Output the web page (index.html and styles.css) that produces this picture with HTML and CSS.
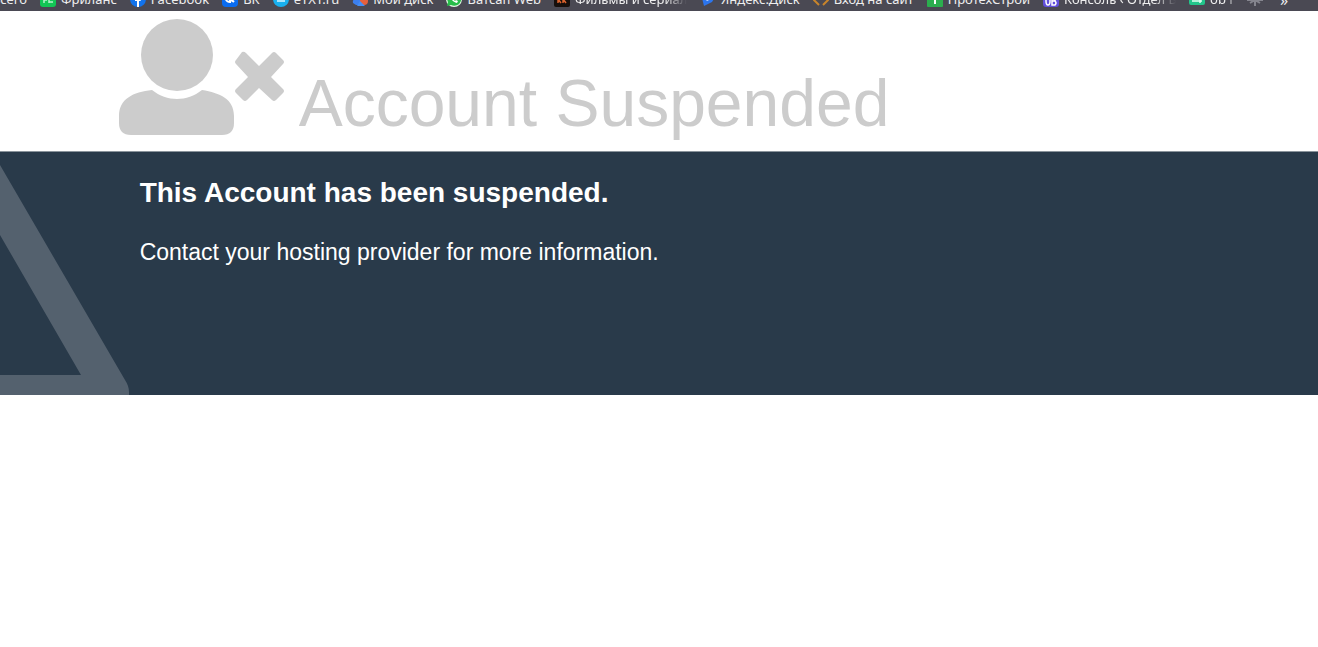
FILE: index.html
```html
<!DOCTYPE html>
<html lang="en">
<head>
    <meta charset="UTF-8">
    <meta name="viewport" content="width=device-width, initial-scale=1.0">
    <title>Account Suspended</title>
    <link rel="stylesheet" href="styles.css">
</head>
<body>
    <nav class="bookmarks" lang="ru">
        <a href="#" class="first">всего</a>
        <a href="#"><svg viewBox="0 0 16 16"><rect width="16" height="16" rx="3" fill="#12c755"/><path d="M4 7v5M4 9h3M9 12V8M9 11h4" stroke="#b5f2cb" stroke-width="1.5" fill="none"/></svg><span>Фриланс</span></a>
        <a href="#"><svg viewBox="0 0 16 16"><circle cx="8" cy="8" r="8" fill="#1273ec"/><path d="M7 16v-6H5V8h2V6c0-2 1-3 4-3v2c-2 0-2 0-2 3h2l-.4 2H9v6z" fill="#fff"/></svg><span>Facebook</span></a>
        <a href="#"><svg viewBox="0 0 16 16"><rect width="16" height="16" rx="4" fill="#0a6cf0"/><path d="M3 6c1 4 2 5 5 5V6M12 6c-1 2-2 3-4 3 2 0 3 1 4 2" stroke="#fff" stroke-width="2" fill="none"/></svg><span>ВК</span></a>
        <a href="#"><svg viewBox="0 0 16 16"><circle cx="8" cy="8" r="8" fill="#18b0ef"/><path d="M4 10h8M5 7h6" stroke="#d9f5ff" stroke-width="1.5"/></svg><span>eTXT.ru</span></a>
        <a href="#"><svg viewBox="0 0 16 16"><path d="M1 12a4 4 0 0 1 3-5 5 5 0 0 1 8 1v6H4z" fill="#3c80ef"/><circle cx="12" cy="10" r="4" fill="#e6603c"/><path d="M5 15l3-5 5 5z" fill="#438df5"/></svg><span>Мой диск</span></a>
        <a href="#"><svg viewBox="0 0 16 16"><circle cx="8" cy="8" r="8" fill="#e9fbe9"/><path d="M1 15l1-4a7 7 0 1 1 3 3z" fill="#27bd49"/><path d="M5 5c0 4 2 6 6 7l1-2-2-1-1 1-3-3 1-1-1-2z" fill="#fff"/></svg><span>Ватсап Web</span></a>
        <a href="#"><svg viewBox="0 0 16 16"><rect width="16" height="16" rx="2" fill="#160f0c"/><path d="M4 5v7M4 9l3-4M4 8l3 4M9 5v7M9 9l3-4M9 8l3 4" stroke="#d9622d" stroke-width="1.5"/></svg><span class="cut">Фильмы и сериалы</span></a>
        <a href="#"><svg viewBox="0 0 16 16"><path d="M1 3l14 3-3 5-8 4z" fill="#2c75ed"/><path d="M1 3l14 3-8 4z" fill="#d7e7ff"/></svg><span>Яндекс.Диск</span></a>
        <a href="#"><svg viewBox="0 0 16 16"><path d="M5 2L1 9l5 5M11 2l4 7-5 5" stroke="#c8842b" stroke-width="2" fill="none"/></svg><span>Вход на сайт</span></a>
        <a href="#"><svg viewBox="0 0 16 16"><rect width="16" height="16" rx="1" fill="#2bae4e"/><path d="M8 4v9M5 6h6" stroke="#fff" stroke-width="2"/></svg><span>ПротехСтрой</span></a>
        <a href="#"><svg viewBox="0 0 16 16"><rect width="16" height="16" rx="3" fill="#6250dc"/><ellipse cx="5" cy="10" rx="2" ry="4" stroke="#fff" stroke-width="1.5" fill="none"/><path d="M9 6v8h3q2-2 0-4H9q5 0 3-4z" stroke="#fff" stroke-width="1.5" fill="none"/></svg><span class="cut">Консоль ‹ Отдел Веб</span></a>
        <a href="#"><svg viewBox="0 0 16 16"><rect width="16" height="14" rx="2" fill="#22c58b"/><path d="M3 10h10M11 7v5" stroke="#e1fff4" stroke-width="1.5"/></svg><span class="cut short">ob Flex</span></a>
        <a href="#" aria-label="Site"><svg viewBox="0 0 16 16"><path d="M0 9h16M3 6l10 6M13 6L3 12M8 4v11" stroke="#85858e" stroke-width="2"/></svg></a>
        <button type="button" class="more">»</button>
    </nav>

    <header class="wrap heading">
        <svg class="user-icon" viewBox="0 0 166 117" aria-hidden="true">
            <circle cx="58" cy="37" r="36"/>
            <path d="M33 72c15 12 35 12 50 0c18 3 32 9 32 26v7q0 12-12 12H12q-12 0-12-12v-7C0 81 14 74 33 72z"/>
            <path d="M123 34Q125 33 127 35L140 48L153 35Q155 33 157 35L164 42Q166 44 164 46L152 59L164 71Q166 73 164 75L157 82Q155 84 153 82L140 70L128 82Q126 84 124 82L117 75Q115 73 117 71L129 59L117 46Q115 44 117 42Z"/>
        </svg>
        <h1>Account Suspended</h1>
    </header>

    <main class="notice">
        <svg class="triangle" viewBox="0 0 129 232" aria-hidden="true">
            <path d="M0 2L125 217Q129 223 129 229V232H0V212H81L0 72z"/>
        </svg>
        <div class="wrap">
            <div class="message">
                <h2>This Account has been suspended.</h2>
                <p>Contact your hosting provider for more information.</p>
            </div>
        </div>
    </main>
</body>
</html>
```

FILE: styles.css
```css
body {
    margin: 0;
    background-color: #fff;
    font-family: "Liberation Sans", Arial, sans-serif;
}
h1, h2, p {
    margin: 0;
}
/* only the lower edge of the bar stays on screen */
.bookmarks {
    display: flex;
    align-items: flex-end;
    gap: 13px;
    height: 11px;
    overflow: hidden;
    background-color: #4a4953;
    color: #eee;
    font-family: "Noto Sans", sans-serif;
    font-size: 13px;
    line-height: 16px;
    white-space: nowrap;
}
.bookmarks a {
    display: flex;
    flex: none;
    gap: 5px;
    padding-bottom: 4px;
    color: inherit;
    text-decoration: none;
}
.bookmarks .first {
    width: 27px;
    justify-content: flex-end;
}
.bookmarks svg {
    width: 16px;
    height: 16px;
}
.cut {
    width: 112px;
    overflow: hidden;
    -webkit-mask-image: linear-gradient(to right, #000 80%, transparent);
    mask-image: linear-gradient(to right, #000 80%, transparent);
}
.short {
    width: 24px;
}
.more {
    margin: 0;
    padding: 0 4px 3px;
    border: none;
    background: none;
    color: inherit;
    font: inherit;
    font-size: 16px;
}
.wrap {
    width: 82%;
    margin: 0 auto;
}
.heading {
    display: flex;
    align-items: flex-end;
    gap: 14px;
    padding: 7px 0 16px;
    color: #ccc;
}
.user-icon {
    flex: none;
    width: 166px;
    height: 117px;
    fill: #ccc;
}
h1 {
    font-size: 66px;
    font-weight: normal;
    line-height: 63px;
}
.notice {
    position: relative;
    border-top: 1px solid #8a949c;
    background-color: #293a4a;
    color: #fff;
}
.triangle {
    position: absolute;
    left: 0;
    bottom: 0;
    width: 129px;
    height: 232px;
    fill: #54616e;
}
.message {
    padding: 25px 21px 129px;
}
h2 {
    margin-bottom: 29px;
    font-size: 28px;
    line-height: 32px;
}
p {
    font-size: 23px;
    line-height: 28px;
}
```
